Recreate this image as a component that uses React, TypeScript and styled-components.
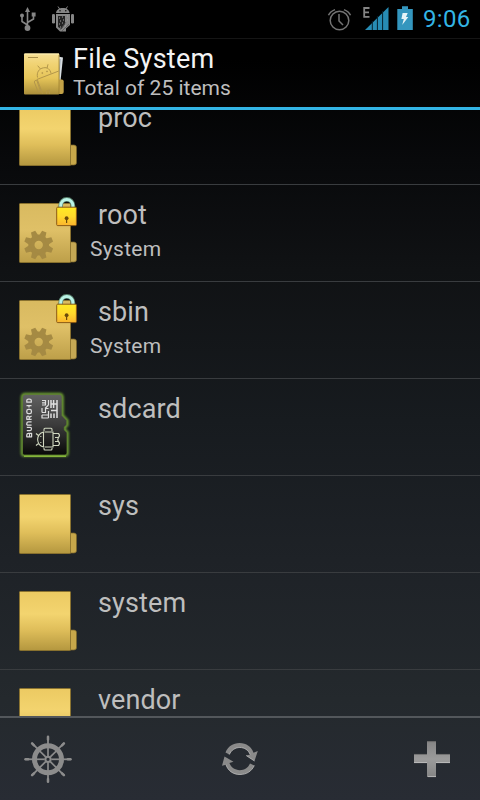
import React from "react";
import styled, { createGlobalStyle } from "styled-components";

const GlobalStyle = createGlobalStyle`
  *, *::before, *::after { box-sizing: border-box; }
  html, body { margin: 0; padding: 0; background: #000; }
  svg { display: block; }
`;

const Screen = styled.div`
  width: 480px;
  height: 800px;
  display: flex;
  flex-direction: column;
  overflow: hidden;
  font-family: Roboto, "Noto Sans", sans-serif;
  color: #bebebe;
  background: linear-gradient(180deg, #000 0, #000 60px, #08090b 160px, #101214 270px, #171b1f 420px, #1e2227 560px, #24292d 700px, #282c34 800px);
`;

const StatusBar = styled.div`
  height: 39px;
  flex: none;
  display: flex;
  align-items: center;
  justify-content: space-between;
  background: #000;
  border-bottom: 1px solid #151515;
`;

const StatusGroup = styled.div`
  display: flex;
  align-items: center;
`;

const Clock = styled.span`
  width: 57px;
  font-size: 24px;
  line-height: 38px;
  letter-spacing: 0.3px;
  color: #33b5e5;
`;

const Header = styled.header`
  height: 71px;
  flex: none;
  display: flex;
  border-bottom: 3px solid #33b5e5;
`;

const HeaderText = styled.div`
  padding-top: 4px;
`;

const Title = styled.h1`
  margin: 0;
  font-size: 27px;
  font-weight: 400;
  line-height: 32px;
  letter-spacing: 0.25px;
  white-space: nowrap;
  color: #f3f3f3;
`;

const Subtitle = styled.div`
  padding-top: 1px;
  font-size: 21px;
  line-height: 25px;
  letter-spacing: 0;
  white-space: nowrap;
`;

const List = styled.ul`
  flex: 1;
  min-height: 0;
  margin: 0;
  padding: 0;
  list-style: none;
  overflow: hidden;
`;

const Row = styled.li<{ $first: boolean }>`
  height: 97px;
  display: flex;
  margin-top: ${(p) => (p.$first ? -22 : 0)}px;
  border-bottom: 1px solid #393c3f;
`;

const RowText = styled.div`
  padding: 14px 0 0 9px;
`;

const Name = styled.div`
  padding-left: 8px;
  font-size: 27px;
  line-height: 32px;
  letter-spacing: 0.12px;
`;

const Kind = styled.div`
  padding-top: 6px;
  font-size: 21px;
  line-height: 25px;
  letter-spacing: 0.3px;
`;

const Toolbar = styled.footer`
  height: 84px;
  flex: none;
  display: flex;
  align-items: center;
  justify-content: space-between;
  padding: 0 23px 1px;
  border-top: 2px solid #53575b;
`;

const UsbIcon = () => (
  <svg width="50" height="38" viewBox="0 0 50 38" fill="none" stroke="#858585" strokeWidth="1.6">
    <path d="M27.5 11V28M27.5 25L22 21.5V16M27.5 22.5L33.5 19V15" />
    <path d="M27.5 7L30 12H25Z" fill="#858585" stroke="none" />
    <circle cx="27.5" cy="28" r="2.9" fill="#858585" stroke="none" />
    <circle cx="22" cy="15.5" r="2" fill="#858585" stroke="none" />
    <path d="M31.7 12.5H35.6V16.5H31.7Z" fill="#858585" stroke="none" />
  </svg>
);

const RobotIcon = () => (
  <svg width="26" height="38" viewBox="50 0 26 38" fill="#858585">
    <path d="M56 13C56.5 9.5 59 8 62.8 8S69 9.5 69.6 13Z" />
    <path d="M58 6.5L60 9.5M67.5 6.5L65.5 9.5" stroke="#858585" strokeWidth="1" />
    <circle cx="60" cy="10.7" r=".7" fill="#000" />
    <circle cx="65.8" cy="10.7" r=".7" fill="#000" />
    <rect x="52" y="14" width="3" height="9.5" rx="1.3" />
    <rect x="71" y="14" width="3" height="9.5" rx="1.3" />
    <path d="M56 14H70V25L66 28.5V31.5H60L56 27.5Z" />
    <path d="M58 16H65V24L61.5 29L58 27Z" fill="#222" />
    <path d="M59 18h1M62 17h1M60 21h1M63 20h1M59 24h1M62 23h1M60 27h1M67 16h1M67 20h1M65 26h1" stroke="#a0a0a0" />
    <path d="M69 24L62 31M66 22L60 30" stroke="#555" strokeWidth=".7" />
  </svg>
);

const AlarmIcon = () => (
  <svg width="30" height="38" viewBox="325 0 30 38" fill="none" stroke="#747474" strokeWidth="1.5">
    <circle cx="339.5" cy="20.5" r="9.3" />
    <path d="M339 14V21L343 25M328.5 15.3Q330 11.5 335 9.6M344 9.6Q349 11.5 350.5 15.3" />
  </svg>
);

const SignalIcon = () => (
  <svg width="36" height="38" viewBox="355 0 36 38">
    <path d="M369.5 8H364.2V16.8H369.5M364.2 12.3H369" fill="none" stroke="#858585" strokeWidth="1.8" />
    <path d="M365 30L388.5 7V30Z" fill="#278cb4" />
    <path d="M372.3 21V30M377.4 16V30M382.6 11V30" stroke="#06202c" strokeWidth="1" />
  </svg>
);

const BatteryIcon = () => (
  <svg width="32" height="38" viewBox="391 0 32 38">
    <path d="M397.3 9H402V6.3H408V9H412.8V30H397.3Z" fill="#3496be" />
    <path d="M402.6 13H407.7L406 17H408.3L402.2 25L403.8 19H401.4Z" fill="#e6f4f8" />
  </svg>
);

const HeaderFolderIcon = () => (
  <svg width="73" height="68" viewBox="0 39 73 68">
    <defs>
      <linearGradient id="headerFolder" x1="0" y1="0" x2="0" y2="1">
        <stop offset="0" stopColor="#f6df94" />
        <stop offset=".25" stopColor="#f1d374" />
        <stop offset=".6" stopColor="#e6c559" />
        <stop offset="1" stopColor="#aa8e3b" />
      </linearGradient>
    </defs>
    <path d="M58 56.5L63 57.5L60 86L57 91Z" fill="#d7dde1" />
    <path d="M60 59L58.8 81" stroke="#8996a4" />
    <rect x="57" y="79.5" width="6.7" height="14.5" rx="2" fill="#c3a247" />
    <rect x="24" y="53.5" width="35.3" height="41" rx="1" fill="url(#headerFolder)" />
    <path d="M24.5 54H59" stroke="#fff1b8" />
    <path d="M28 57.5H38" stroke="#a98f4a" />
    <path d="M59 55V94" stroke="#987d2f" strokeWidth=".7" />
    <g fill="none" stroke="#b3964a" strokeWidth="1">
      <path d="M37.5 77.5C36.5 72 39 68.7 43.5 67.8C47.5 67 50.3 69.5 51 73.5M37.7 65.7L40.5 69M48 64.3L47 68.2" />
      <path d="M36.8 79.5L58.8 71M37.2 79.3L42.5 93.7M34.3 82Q34.6 79.8 36.8 80.5L40.5 91Q38.5 92.8 37.7 91ZM46.5 94V91L49.5 90V94" />
      <circle cx="42.3" cy="73" r=".5" />
      <circle cx="47" cy="71.4" r=".5" />
    </g>
  </svg>
);

const Defs = () => (
  <svg width="0" height="0" style={{ position: "absolute" }} aria-hidden>
    <defs>
      <linearGradient id="folder" x1="0" y1="0" x2="0" y2="1">
        <stop offset="0" stopColor="#ecca62" />
        <stop offset=".38" stopColor="#f3d46f" />
        <stop offset=".65" stopColor="#dfbe5a" />
        <stop offset="1" stopColor="#b4973f" />
      </linearGradient>
      <linearGradient id="systemFolder" x1="0" y1="0" x2="0" y2="1">
        <stop offset="0" stopColor="#d9ba60" />
        <stop offset=".45" stopColor="#dfc067" />
        <stop offset="1" stopColor="#bd9f49" />
      </linearGradient>
      <linearGradient id="padlock" x1="0" y1="0" x2="0" y2="1">
        <stop offset="0" stopColor="#ffea24" />
        <stop offset=".5" stopColor="#ffd92c" />
        <stop offset="1" stopColor="#fbb42e" />
      </linearGradient>
      <linearGradient id="card" x1="0" y1="0" x2="0" y2="1">
        <stop offset="0" stopColor="#626262" />
        <stop offset=".5" stopColor="#3b3b3b" />
        <stop offset="1" stopColor="#080808" />
      </linearGradient>
      <linearGradient id="metal" x1="0" y1="0" x2="0" y2="1">
        <stop offset="0" stopColor="#858585" />
        <stop offset=".5" stopColor="#9b9b9b" />
        <stop offset="1" stopColor="#858585" />
      </linearGradient>
      <filter id="glow" x="-20%" y="-20%" width="140%" height="140%">
        <feGaussianBlur stdDeviation="1.2" />
      </filter>
    </defs>
  </svg>
);

const FolderIcon = ({ system = false }: { system?: boolean }) => {
  const fill = system ? "url(#systemFolder)" : "url(#folder)";
  return (
    <svg width="81" height="96" viewBox="0 0 81 96">
      <path d="M70 57H74Q76.5 57 76.5 59.5V74.5Q76.5 77 74 77H70Z" fill={system ? "#c5a854" : "#c7a74a"} stroke="#7b6628" strokeWidth=".7" />
      <rect x="19.5" y="18.5" width="51" height="59" rx=".8" fill={fill} stroke="#8b732e" strokeWidth=".9" />
      {system && (
        <>
          <circle cx="38.7" cy="60" r="7.3" fill="none" stroke="#a58a43" strokeWidth="6.2" />
          <g fill="#a58a43">
            {[22.5, 67.5, 112.5, 157.5, 202.5, 247.5, 292.5, 337.5].map((a) => (
              <path key={a} d="M35.2 52L36.4 45.4H41L42.2 52Z" transform={`rotate(${a} 38.7 60)`} />
            ))}
          </g>
          <path d="M60.7 23V20.5A6.1 6.1 0 0 1 72.9 20.5V23" fill="none" stroke="#5b826e" strokeWidth="4.6" />
          <path d="M60.7 23V20.5A6.1 6.1 0 0 1 72.9 20.5V23" fill="none" stroke="#b9f3e6" strokeWidth="3" />
          <rect x="56.7" y="22.2" width="19.7" height="18.4" rx="1" fill="url(#padlock)" stroke="#8d5b14" />
          <circle cx="66.6" cy="33.2" r="1.9" fill="#6c4a0a" />
          <path d="M66.6 33V38" stroke="#6c4a0a" strokeWidth="1.2" />
        </>
      )}
    </svg>
  );
};

const CARD =
  "M25.5 394.5H59.5Q62 394.5 62 397.5V415.5L66.8 420.5V425L64.3 427V430L67 432.5V453Q67 455 65 455H24Q22.5 455 22.5 453V397.5Q22.5 394.5 25.5 394.5Z";

const SdCardIcon = () => (
  <svg width="81" height="96" viewBox="0 379 81 96">
    <path d={CARD} fill="#4f7a24" stroke="#6b9c30" strokeWidth="3.6" filter="url(#glow)" />
    <path d={CARD} fill="url(#card)" stroke="#5e7f30" strokeWidth=".8" />
    <path d="M24 456.2H66" stroke="#86b53a" strokeWidth="1.4" />
    <g fill="none" stroke="#dcdcdc" strokeWidth="1.25" strokeLinejoin="round">
      <path d="M31.3 402.2V400.5Q31.3 399 29.5 399H28.5Q26.8 399 26.8 400.5V402.2Z" />
      <path d="M26.5 405.5H31.5M29 405.5V407.5" />
      <rect x="26.8" y="409.3" width="4.6" height="4.4" rx="1.6" />
      <path d="M31.6 419.3H29.2V417.3Q29.2 416 28 416Q26.8 416 26.8 417.3V419.3H29M29.2 417.5L31.6 416" />
      <path d="M26.8 425V423.5Q26.8 421.8 28.5 421.8H31.6M26.8 425H31.6" />
      <path d="M26.8 427.3H30Q31.5 427.3 31.5 428.8Q31.5 430.6 30 430.6H26.8" />
      <path d="M31.6 433.3H28.5Q26.8 433.3 26.8 435V436.8H31.6ZM29.5 433.3V436.8" />
    </g>
    <g fill="none" stroke="#dedede" strokeWidth="1.2">
      <path d="M42 400.5H45.5V405H42M42 402.8H45.5M42 408V412.5M45.5 407.5V412.5H42M42 415H48.5M42 418H48.5M42 415V418.5M48.5 400V405M48.5 405L45.5 408M48.5 408.5H45.5M48.5 411V418" />
      <path d="M51 400V408M53.6 400V408M51 404H57M51 410.5H57M51 413.5V418M54 413.5V418M57 400V418" strokeWidth="1.5" />
    </g>
    <g fill="none" stroke="#d0d7c0" strokeWidth="1.1">
      <path d="M43.5 432V447Q38 445.5 37.6 439.5Q38 433.5 43.5 432ZM44.5 432H53V447H44.5M44 431V429.3Q44 428.3 45 428.3H51Q52 428.3 52 429.3V431M44 448V449Q44 450 45 450H51Q52 450 52 449V448M53 433.5H58.5Q60.5 435.5 58.5 437.5H55M58.5 437.5Q57 439.5 58.5 441.5M55 441.5H58.5Q60.5 443.5 58.5 445.5H53M36 433.5L39 436M36 445.5L39 443" />
      <path d="M40.8 436v1M40.8 442v1" />
    </g>
  </svg>
);

const WheelIcon = () => (
  <svg width="50" height="50" viewBox="23 733 50 50" fill="none" stroke="#8c8c8c">
    <circle cx="48" cy="758.3" r="13.5" strokeWidth="5" />
    <circle cx="48" cy="758.3" r="2.6" strokeWidth="2" />
    {[0, 45, 90, 135, 180, 225, 270, 315].map((a) => (
      <g key={a} transform={`rotate(${a} 48 758.3)`}>
        <path d="M48 755V743" strokeWidth="1.7" />
        <path d="M48 743V735.5" strokeWidth="1.8" />
        <path d="M48 738.5V735.8" strokeWidth="2.5" strokeLinecap="round" />
      </g>
    ))}
  </svg>
);

const SyncIcon = () => (
  <svg width="38" height="38" viewBox="221 739 38 38">
    <path d="M225.5 751.5C228 745.5 233 742 239.5 742C246.5 742 251.5 745.8 253.5 751.7L257.8 750L254.5 760L246.2 754.5L250.2 753.5C248.3 749 244.5 746.5 239.8 746.5C235.3 746.5 231.4 749 229.3 753.5Z" fill="#8a8a8a" />
    <path d="M229.3 753.5C231.4 749 235.3 746.5 239.8 746.5C244.5 746.5 248.3 749 250.2 753.5M246.2 754.5L254.5 760" fill="none" stroke="#c0c0c0" strokeWidth=".8" />
    <path d="M254.3 764.5C251.8 770 246.8 773.5 240 773.5C233 773.5 228 769.8 226 763.7L222 764.8L224.5 755.5L233.5 760.7L229.4 762.1C231 766.5 235 769.2 239.8 769.2C244.5 769.2 248 767 250 762.5Z" fill="#8a8a8a" />
    <path d="M226 763.7C228 769.8 233 773.5 240 773.5C246.8 773.5 251.8 770 254.3 764.5" fill="none" stroke="#bdbdbd" strokeWidth=".8" />
  </svg>
);

const PlusIcon = () => (
  <svg width="50" height="38" viewBox="407 739 50 38">
    <path d="M427 740.3H436V753H450V762H436V776H427V762H414V753H427Z" fill="url(#metal)" />
    <path d="M414 761.6H427M436 761.6H450M428 775.6H436" stroke="#c4c4c4" strokeWidth=".8" />
    <path d="M427 740.6H436M414 753.4H427M436 753.4H450" stroke="#666" strokeWidth=".8" />
  </svg>
);

type Entry = { name: string; kind?: string; icon: "folder" | "system" | "card" };

const entries: Entry[] = [
  { name: "proc", icon: "folder" },
  { name: "root", kind: "System", icon: "system" },
  { name: "sbin", kind: "System", icon: "system" },
  { name: "sdcard", icon: "card" },
  { name: "sys", icon: "folder" },
  { name: "system", icon: "folder" },
  { name: "vendor", icon: "folder" },
];

export default function App() {
  return (
    <>
      <GlobalStyle />
      <Defs />
      <Screen>
        <StatusBar>
          <StatusGroup>
            <UsbIcon />
            <RobotIcon />
          </StatusGroup>
          <StatusGroup>
            <AlarmIcon />
            <SignalIcon />
            <BatteryIcon />
            <Clock>9:06</Clock>
          </StatusGroup>
        </StatusBar>
        <Header>
          <HeaderFolderIcon />
          <HeaderText>
            <Title>File System</Title>
            <Subtitle>Total of 25 items</Subtitle>
          </HeaderText>
        </Header>
        <List>
          {entries.map((entry, index) => (
            <Row key={entry.name} $first={index === 0}>
              {entry.icon === "card" ? <SdCardIcon /> : <FolderIcon system={entry.icon === "system"} />}
              <RowText>
                <Name>{entry.name}</Name>
                {entry.kind && <Kind>{entry.kind}</Kind>}
              </RowText>
            </Row>
          ))}
        </List>
        <Toolbar>
          <WheelIcon />
          <SyncIcon />
          <PlusIcon />
        </Toolbar>
      </Screen>
    </>
  );
}
